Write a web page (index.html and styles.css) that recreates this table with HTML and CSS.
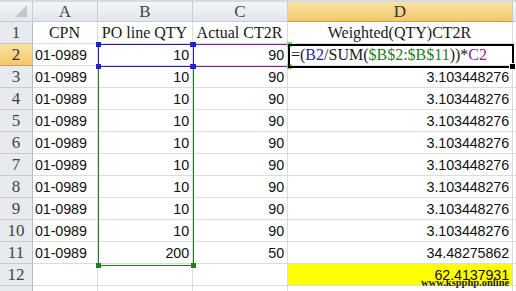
FILE: index.html
```html
<!DOCTYPE html>
<html>
<head>
<meta charset="utf-8">
<link rel="stylesheet" href="styles.css">
</head>
<body>
<div class="sheet">
  <div class="grid">
    <div class="hd corner"><span class="tri"></span></div>
    <div class="hd col">A</div>
    <div class="hd col">B</div>
    <div class="hd col">C</div>
    <div class="hd col sel">D</div>
    <div class="hd col"></div>

    <div class="hd row">1</div>
    <div class="c t ctr">CPN</div>
    <div class="c t ctr">PO line QTY</div>
    <div class="c t ctr">Actual CT2R</div>
    <div class="c t ctr">Weighted(QTY)CT2R</div>
    <div class="c"></div>

    <div class="hd row sel">2</div>
    <div class="c n">01-0989</div>
    <div class="c n r">10</div>
    <div class="c n r">90</div>
    <div class="c t f">=(<span class="fb">B2</span>/SUM(<span class="fg">$B$2:$B$11</span>))*<span class="fp">C2</span></div>
    <div class="c"></div>

    <div class="hd row">3</div><div class="c n">01-0989</div><div class="c n r">10</div><div class="c n r">90</div><div class="c n r">3.103448276</div><div class="c"></div>
    <div class="hd row">4</div><div class="c n">01-0989</div><div class="c n r">10</div><div class="c n r">90</div><div class="c n r">3.103448276</div><div class="c"></div>
    <div class="hd row">5</div><div class="c n">01-0989</div><div class="c n r">10</div><div class="c n r">90</div><div class="c n r">3.103448276</div><div class="c"></div>
    <div class="hd row">6</div><div class="c n">01-0989</div><div class="c n r">10</div><div class="c n r">90</div><div class="c n r">3.103448276</div><div class="c"></div>
    <div class="hd row">7</div><div class="c n">01-0989</div><div class="c n r">10</div><div class="c n r">90</div><div class="c n r">3.103448276</div><div class="c"></div>
    <div class="hd row">8</div><div class="c n">01-0989</div><div class="c n r">10</div><div class="c n r">90</div><div class="c n r">3.103448276</div><div class="c"></div>
    <div class="hd row">9</div><div class="c n">01-0989</div><div class="c n r">10</div><div class="c n r">90</div><div class="c n r">3.103448276</div><div class="c"></div>
    <div class="hd row">10</div><div class="c n">01-0989</div><div class="c n r">10</div><div class="c n r">90</div><div class="c n r">3.103448276</div><div class="c"></div>
    <div class="hd row">11</div><div class="c n">01-0989</div><div class="c n r">200</div><div class="c n r">50</div><div class="c n r">34.48275862</div><div class="c"></div>
    <div class="hd row">12</div><div class="c"></div><div class="c"></div><div class="c"></div><div class="c n r yel">62.4137931</div><div class="c"></div>
    <div class="hd row"></div><div class="c"></div><div class="c"></div><div class="c"></div><div class="c"></div><div class="c"></div>
  </div>

  <div class="box green"><i class="h bl"></i><i class="h br"></i></div>
  <div class="box purple"><i class="h tl"></i><i class="h tr"></i><i class="h bl"></i><i class="h br"></i></div>
  <div class="box blue"><i class="h tl"></i><i class="h tr"></i><i class="h bl"></i><i class="h br"></i></div>
  <div class="box active"><i class="fill"></i></div>
  <div class="wm">www.kspphp.online</div>
</div>
</body>
</html>
```
FILE: styles.css
```css
html, body { margin: 0; padding: 0; background: #fff; }
body { width: 516px; height: 291px; overflow: hidden; }
.sheet { position: relative; width: 516px; height: 291px; overflow: hidden; }
.grid {
  display: grid;
  grid-template-columns: 33px 65px 95px 95px 225px 40px;
  grid-template-rows: 22px repeat(13, 22px);
}
.hd {
  background: linear-gradient(#f3f5f8, #e2e6ec);
  border-right: 1px solid #c5cbd3;
  border-bottom: 1px solid #c5cbd3;
  color: #444;
  font-family: "Liberation Serif", serif;
  font-size: 17px;
  display: flex; align-items: center; justify-content: center;
  box-sizing: border-box;
}
.hd.col { border-top: 2px solid #d6dbe2; padding-top: 1px; }
.hd.corner { border-top: 2px solid #d6dbe2; position: relative; }
.tri {
  position: absolute; right: 5px; bottom: 4px;
  width: 0; height: 0;
  border-left: 12px solid transparent;
  border-bottom: 12px solid #c2c6cc;
}
.hd.row { background: #e7eaee; border-right: 1px solid #b4bcc6; font-size: 17px; }
.hd.sel { background: linear-gradient(#fbe3a6, #f3c76a); border-bottom-color: #c9a04e; color: #333; }
.c {
  border-right: 1px solid #dadcdd;
  border-bottom: 1px solid #dadcdd;
  box-sizing: border-box;
  display: flex; align-items: center;
  padding: 0 3px 0 2px;
  white-space: nowrap;
  overflow: visible;
  color: #000;
}
.t { font-family: "Liberation Serif", serif; font-size: 16px; color: #1a1a1a; }
.n { font-family: "Liberation Sans", sans-serif; font-size: 14.3px; letter-spacing: -0.1px; color: #111; }
.ctr { justify-content: center; }
.r { justify-content: flex-end; }
.f { padding-left: 3px; }
.fb { color: #1f1fa8; }
.fg { color: #2a7a2a; }
.fp { color: #8b1c9b; }
.yel { background: #ffff00; }

.box { position: absolute; box-sizing: border-box; }
.green { left: 98px; top: 44px; width: 96px; height: 222px; border: 1px solid #1e7f1e; }
.purple { left: 193px; top: 44px; width: 96px; height: 23px; border-top: 1px solid #8a1e96; border-bottom: 1px solid #8a1e96; }
.blue { left: 98px; top: 44px; width: 96px; height: 23px; border: 1px solid #2020b8; }
.active { left: 288px; top: 44px; width: 226px; height: 24px; border: 2px solid #000; }
.h { position: absolute; width: 5px; height: 5px; }
.green .h { background: #1e7f1e; }
.purple .h { background: #8a1e96; }
.blue .h { background: #2020d8; }
.tl { left: -3px; top: -3px; }
.tr { right: -3px; top: -3px; }
.bl { left: -3px; bottom: -3px; }
.br { right: -3px; bottom: -3px; }
.purple .tr, .purple .br { background: #7ad26a; right: -3px; }
.fill { position: absolute; right: -4px; bottom: -4px; width: 5px; height: 5px; background: #000; border: 1px solid #fff; }
.wm {
  position: absolute; left: 421px; top: 277px;
  font-family: "Liberation Serif", serif; font-weight: bold;
  font-size: 10.5px; color: #222; letter-spacing: 0;
}
```
